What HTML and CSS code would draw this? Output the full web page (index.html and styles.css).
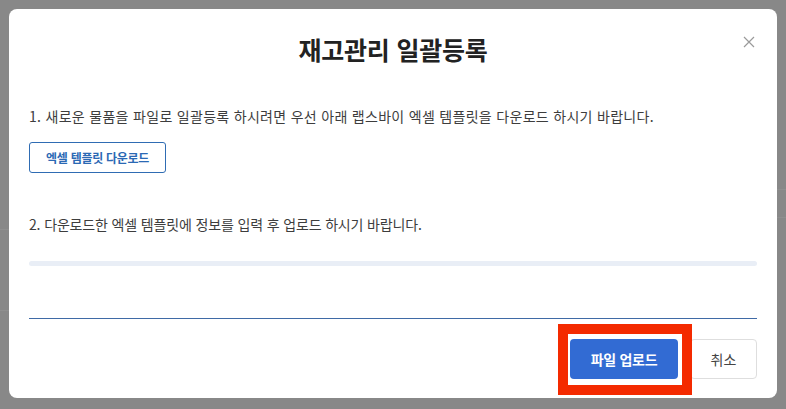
FILE: index.html
```html
<!DOCTYPE html>
<html lang="ko">
<head>
    <meta charset="UTF-8">
    <meta name="viewport" content="width=device-width, initial-scale=1.0">
    <title>재고관리 일괄등록</title>
    <link rel="stylesheet" href="styles.css">
</head>
<body>
    <div class="modal">
        <div class="modal-header">
            <h1>재고관리 일괄등록</h1>
            <button class="close-btn" aria-label="닫기">
                <svg width="12" height="12" viewBox="0 0 12 12">
                    <path d="M1 1 L11 11 M11 1 L1 11" stroke="#9a9a9a" stroke-width="1.2" fill="none"/>
                </svg>
            </button>
        </div>

        <div class="modal-body">
            <p class="step step-one">1. 새로운 물품을 파일로 일괄등록 하시려면 우선 아래 랩스바이 엑셀 템플릿을 다운로드 하시기 바랍니다.</p>
            <button class="outline-btn">엑셀 템플릿 다운로드</button>

            <p class="step step-two">2. 다운로드한 엑셀 템플릿에 정보를 입력 후 업로드 하시기 바랍니다.</p>
            <div class="progress"><div class="progress-fill" style="width: 0%"></div></div>
            <div class="file-field"></div>
        </div>

        <div class="modal-footer">
            <div class="highlight-wrap">
                <button class="primary-btn">파일 업로드</button>
                <span class="highlight"></span>
            </div>
            <button class="cancel-btn">취소</button>
        </div>
    </div>
</body>
</html>
```

FILE: styles.css
```css
* {
    margin: 0;
    padding: 0;
    box-sizing: border-box;
    font-family: "Noto Sans CJK KR", "Noto Sans", sans-serif;
}

body {
    width: 786px;
    height: 409px;
    padding: 9px;
    overflow: hidden;
    background:
        linear-gradient(#8f8f8f, #8f8f8f) 0 229px / 9px 1px no-repeat,
        linear-gradient(#8f8f8f, #8f8f8f) 0 310px / 9px 1px no-repeat,
        linear-gradient(#8f8f8f, #8f8f8f) 777px 189px / 9px 1px no-repeat,
        linear-gradient(#8f8f8f, #8f8f8f) 777px 217px / 9px 1px no-repeat,
        #888888;
}

.modal {
    width: 768px;
    height: 389px;
    background: white;
    border-radius: 8px;
    display: flex;
    flex-direction: column;
}

.modal-header {
    position: relative;
    padding: 22px 20px 0;
    text-align: center;
}

.modal-header h1 {
    font-size: 25px;
    line-height: 36px;
    font-weight: 700;
    color: #222;
    letter-spacing: -0.2px;
}

.close-btn {
    position: absolute;
    top: 27px;
    right: 22px;
    background: none;
    border: none;
    cursor: pointer;
    line-height: 0;
}

.modal-body {
    padding: 39px 20px 0;
}

.step {
    font-size: 14px;
    line-height: 20px;
    color: #3d3d3d;
}

.step-one {
    letter-spacing: 0.3px;
}

.step-two {
    margin-top: 41px;
    letter-spacing: -0.15px;
}

.outline-btn {
    margin-top: 16px;
    width: 137px;
    height: 31px;
    background: white;
    border: 1px solid #2f6cb3;
    border-radius: 3px;
    color: #2b69b4;
    font-size: 12px;
    font-weight: 700;
    letter-spacing: -0.3px;
    cursor: pointer;
}

.progress {
    margin-top: 27px;
    height: 5px;
    background: #e9eef6;
    border-radius: 3px;
    overflow: hidden;
}

.progress-fill {
    height: 100%;
    background: #316bd1;
}

.file-field {
    height: 53px;
    border-bottom: 1px solid #3f6aa6;
}

.modal-footer {
    display: flex;
    justify-content: flex-end;
    gap: 12px;
    padding: 20px 20px 0;
}

.highlight-wrap {
    position: relative;
}

.primary-btn {
    width: 108px;
    height: 40px;
    background: #326bd3;
    color: white;
    border: none;
    border-radius: 4px;
    font-size: 14px;
    font-weight: 700;
    letter-spacing: -0.3px;
    cursor: pointer;
}

.highlight {
    position: absolute;
    left: -12px;
    right: -14px;
    top: -15px;
    bottom: -16px;
    border: 10px solid #f42a00;
    pointer-events: none;
}

.cancel-btn {
    width: 67px;
    height: 40px;
    background: white;
    border: 1px solid #dedede;
    border-radius: 4px;
    color: #444;
    font-size: 14px;
    cursor: pointer;
}
```
